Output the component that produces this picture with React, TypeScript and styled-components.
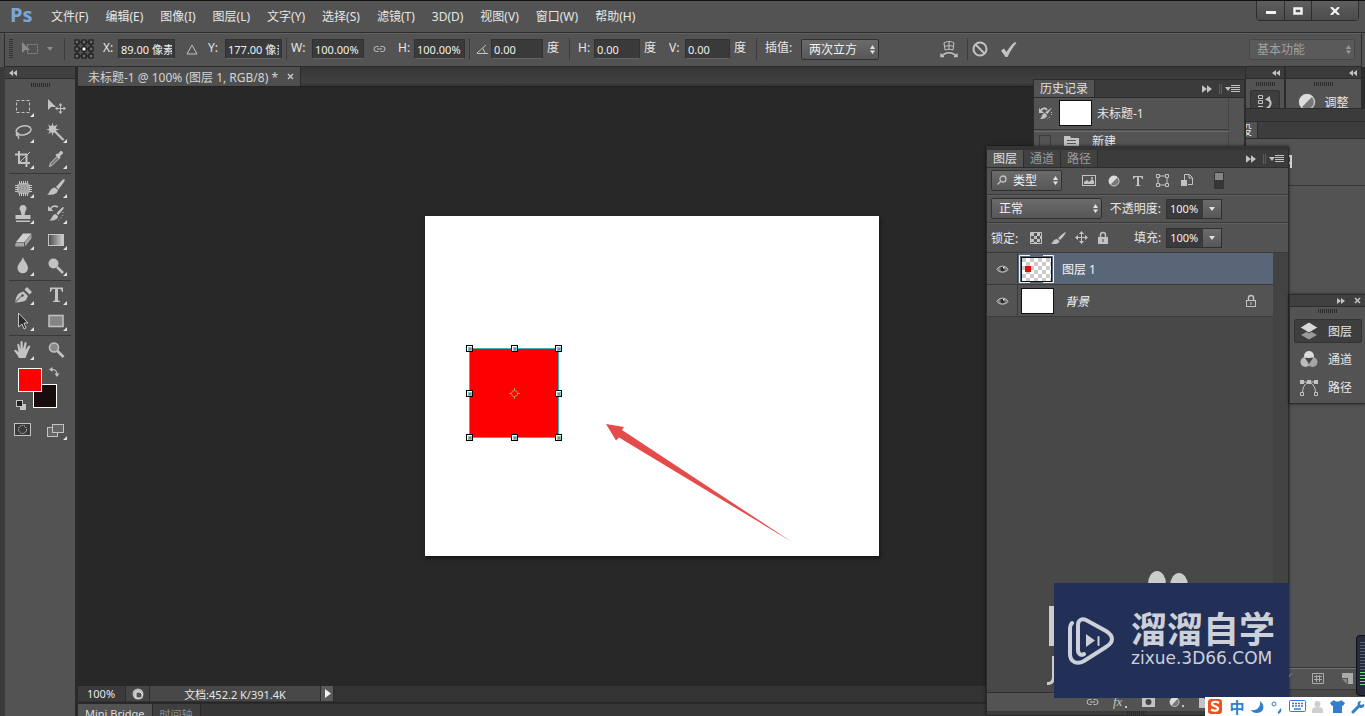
import React from 'react';
import styled, { createGlobalStyle, css } from 'styled-components';

const LINE = '#2c2c2c';
const PANEL = '#535353';
const STRIP = '#3b3b3b';
const INK = '#c3c3c3';

const Global = createGlobalStyle`
  *, *::before, *::after { box-sizing: border-box; }
  html, body { margin: 0; padding: 0; background: #282828; }
  body, button, input, select {
    font-family: "Noto Sans", "Noto Sans CJK SC", sans-serif;
    font-size: 12px;
    color: #e6e6e6;
  }
  button { border: 0; padding: 0; background: none; }
  svg { display: block; flex: none; }
`;

const Window = styled.div`
  position: relative;
  display: flex;
  flex-direction: column;
  height: 100vh;
  overflow: hidden;
  background: ${PANEL};
  border-top: 1px solid #111;
`;

/* ---------- title / menu bar ---------- */

const MenuBar = styled.header`
  display: flex;
  flex: none;
  height: 32px;
  padding-left: 10px;
  border-bottom: 1px solid ${LINE};
`;

const Logo = styled.div`
  width: 33px;
  font: bold 20px/28px "Open Sans", sans-serif;
  color: #7ba7d8;
`;

const Menus = styled.nav`
  display: flex;
  align-items: center;
  gap: 1px;
`;

const MenuButton = styled.button`
  padding: 0 8px;
  line-height: 20px;
  white-space: nowrap;
`;

const WindowButtons = styled.div`
  display: flex;
  height: 20px;
  margin: 0 6px 0 auto;
  border: 1px solid #2e2e2e;
  border-top: 0;
  border-radius: 0 0 4px 4px;
`;

const WindowButton = styled.button<{ $wide?: boolean }>`
  display: grid;
  place-items: center;
  width: ${p => (p.$wide ? 47 : 27)}px;
  background: linear-gradient(#5e5e5e, #4c4c4c);
  & + & { border-left: 1px solid #2e2e2e; }
`;

/* ---------- options bar ---------- */

const OptionsBar = styled.form`
  display: flex;
  flex: none;
  align-items: center;
  height: 34px;
  margin: 0 3px 0 4px;
  padding: 0 0 2px 4px;
  border: 1px solid ${LINE};
  border-top-color: #626262;
`;

const Slot = styled.span<{ $w: number }>`
  display: grid;
  flex: none;
  place-items: center;
  width: ${p => p.$w}px;
`;

const SlotButton = styled(Slot).attrs({ as: 'button', type: 'button' })``;

const OptionLabel = styled.label<{ $w: number; $pad?: boolean }>`
  flex: none;
  width: ${p => p.$w}px;
  padding-left: ${p => (p.$pad ? 4 : 0)}px;
  padding-bottom: 2px;
  line-height: 16px;
  white-space: nowrap;
`;

const Field = styled.input<{ $w: number }>`
  flex: none;
  width: ${p => p.$w}px;
  height: 20px;
  padding: 0 2px;
  border: 1px solid #313131;
  border-bottom-color: #646464;
  background: #3a3a3a;
  font-size: 11px;
  color: #f0f0f0;
`;

const Divider = styled.span`
  flex: none;
  width: 1px;
  height: 22px;
  margin: 0 4px;
  background: #3c3c3c;
`;

const SelectWrap = styled.span<{ $w?: number; $dim?: boolean }>`
  display: grid;
  flex: none;
  align-items: center;
  width: ${p => p.$w}px;
  height: 21px;
  border: 1px solid ${p => (p.$dim ? '#474747' : '#303030')};
  border-radius: 2px;
  background: ${p => (p.$dim ? '#5a5a5a' : 'linear-gradient(#6b6b6b, #575757)')};
  & > * { grid-area: 1 / 1; }
  & > svg { justify-self: end; margin-right: 3px; pointer-events: none; }
`;

const Select = styled.select<{ $dim?: boolean; $indent?: boolean }>`
  width: 100%;
  height: 19px;
  padding: 0 0 0 ${p => (p.$indent ? 21 : 7)}px;
  border: 0;
  appearance: none;
  background: none;
  color: ${p => (p.$dim ? '#a0a0a0' : '#f2f2f2')};
`;

const LeadIcon = styled.span`
  justify-self: start;
  margin-left: 5px;
`;

const Spacer = styled.span`
  flex: 1;
`;

/* ---------- body ---------- */

const Body = styled.div`
  display: flex;
  flex: 1;
  min-height: 0;
`;

const Toolbox = styled.aside`
  display: flex;
  flex: none;
  flex-direction: column;
  width: 78px;
  border: solid;
  border-width: 0 3px 0 5px;
  border-color: transparent #2a2a2a transparent #3a3a3a;
`;

const CollapseStrip = styled.div`
  display: flex;
  flex: none;
  align-items: center;
  height: 12px;
  padding: 0 4px;
  background: #404040;
  border-bottom: 1px solid ${LINE};
`;

const ToolGrip = styled.div<{ $short?: boolean }>`
  display: grid;
  place-items: center;
  height: ${p => (p.$short ? 12 : 15)}px;
  padding-bottom: 4px;
`;

const ToolGroup = styled.div`
  display: grid;
  grid-template-columns: 33px 33px;
  padding-left: 2px;
`;

const ToolRule = styled.hr`
  width: 62px;
  height: 1px;
  margin: 1px 4px;
  border: 0;
  background: #383838;
`;

const ToolButton = styled.button`
  height: 26px;
`;

const ColorArea = styled.div`
  padding: 4px 0 6px 10px;
`;

const Workspace = styled.main`
  display: flex;
  flex: 1;
  flex-direction: column;
  min-width: 0;
  background: #282828;
`;

const DocTabs = styled.div`
  display: flex;
  flex: none;
  height: 20px;
  background: linear-gradient(#363636, #404040 80%, #343434);
  border-bottom: 1px solid #222;
`;

const DocTab = styled.div`
  display: flex;
  align-items: center;
  gap: 9px;
  padding: 0 6px 0 10px;
  border-right: 1px solid #2a2a2a;
  background: #4f4f4f;
  color: #d4d4d4;
  white-space: nowrap;
`;

const Pasteboard = styled.div`
  display: grid;
  flex: 1;
  place-items: center;
  min-height: 0;
  padding: 0 20px 2px 0;
`;

const Artboard = styled.div`
  background: #fff;
  box-shadow: 1px 2px 4px #0008;
`;

const StatusBar = styled.footer`
  display: flex;
  flex: none;
  height: 17px;
  padding-bottom: 1px;
  background: #333;
  border-bottom: 1px solid #262626;
  font-size: 11px;
`;

const StatusCell = styled.div<{ $w: number; $bg: string; $center?: boolean }>`
  display: flex;
  align-items: center;
  justify-content: ${p => (p.$center ? 'center' : 'flex-start')};
  width: ${p => p.$w}px;
  padding-left: ${p => (p.$center ? 0 : 9)}px;
  border-right: 1px solid #2c2c2c;
  background: ${p => p.$bg};
  white-space: nowrap;
`;

const BottomTabs = styled.div`
  display: flex;
  flex: none;
  height: 13px;
  overflow: hidden;
  background: #363636;
  border-top: 1px solid #2a2a2a;
`;

const BottomTab = styled.button<{ $on?: boolean }>`
  height: 19px;
  padding: 0 7px;
  border-right: 1px solid #2a2a2a;
  background: ${p => (p.$on ? PANEL : '#3f3f3f')};
  color: ${p => (p.$on ? '#dcdcdc' : '#8e8e8e')};
  font-size: 11px;
`;

/* ---------- right dock ---------- */

const Dock = styled.aside`
  display: flex;
  flex: none;
  flex-direction: column;
  width: 120px;
  border-left: 1px solid ${LINE};
`;

const DockTop = styled.div`
  display: grid;
  flex: none;
  grid-template: 12px 29px / 38px 1fr;
  column-gap: 2px;
  padding-right: 4px;
  background: ${LINE};
`;

const DockHead = styled.div`
  display: flex;
  align-items: center;
  justify-content: flex-end;
  padding: 0 4px 0 0;
  background: ${STRIP};
  border-bottom: 1px solid ${LINE};
`;

const DockCell = styled.div`
  display: flex;
  flex-direction: column;
  align-items: center;
  gap: 4px;
  overflow: hidden;
  padding-top: 3px;
  background: ${PANEL};
`;

const DockItem = styled.button<{ $on?: boolean }>`
  display: flex;
  flex: none;
  align-items: center;
  gap: 8px;
  height: 24px;
  padding: 0 8px;
  border-radius: 3px;
  white-space: nowrap;
  ${p => p.$on && css`background: #3e3e3e; box-shadow: inset 0 0 0 1px #333;`}
`;

const DockStrip = styled.div`
  flex: none;
  height: 13px;
  background: ${STRIP};
  border-top: 1px solid ${LINE};
`;

const DockTabs = styled.div`
  display: flex;
  flex: none;
  height: 18px;
  background: #3d3d3d;
  border: 1px solid ${LINE};
  border-width: 1px 0;
`;

const DockTabStub = styled.div`
  display: flex;
  align-items: center;
  justify-content: flex-end;
  width: 12px;
  overflow: hidden;
  padding-right: 5px;
  background: ${PANEL};
  border-right: 1px solid ${LINE};
`;

const DockBody = styled.div<{ $h?: number }>`
  display: flex;
  align-items: center;
  flex: ${p => (p.$h ? 'none' : 1)};
  height: ${p => p.$h}px;
  padding-left: 41px;
  border-bottom: 1px solid #363636;
`;

const DockTools = styled.div`
  display: flex;
  flex: none;
  align-items: center;
  justify-content: flex-end;
  gap: 18px;
  height: 22px;
  padding: 0 12px 2px 0;
  border-bottom: 1px solid #3a3a3a;
  border-top: 1px solid #707070;
`;

const DockTail = styled.div`
  flex: none;
  height: 26px;
  background: #484848;
`;

/* ---------- floating panels ---------- */

const Floating = styled.section`
  position: absolute;
  display: flex;
  flex-direction: column;
  background: ${PANEL};
  overflow: hidden;
`;

const HistoryPanel = styled(Floating)`
  top: 78px;
  right: 120px;
  width: 212px;
  height: 69px;
  border: 1px solid ${LINE};
`;

const LayersPanel = styled(Floating)`
  top: 145px;
  right: 76px;
  bottom: 0;
  width: 303px;
  border: 1px solid #2a2a2a;
  border-top: 4px solid #343434;
  box-shadow: 0 0 3px #0009;
`;

const GroupPanel = styled(Floating)`
  top: 293px;
  right: 0;
  width: 76px;
  height: 110px;
  border: 1px solid ${LINE};
  border-right: 0;
  box-shadow: 0 0 3px #0008;
`;

const PanelTabs = styled.div`
  display: flex;
  flex: none;
  align-items: stretch;
  height: 18px;
  background: ${STRIP};
  border-bottom: 1px solid ${LINE};
`;

const PanelTab = styled.button<{ $on?: boolean }>`
  padding: 0 6px;
  border-right: 1px solid ${LINE};
  background: ${p => (p.$on ? PANEL : '#414141')};
  color: ${p => (p.$on ? '#e0e0e0' : '#9b9b9b')};
  line-height: 17px;
`;

const PanelTools = styled.div`
  display: flex;
  align-items: center;
  margin-left: auto;
  padding-right: 3px;
`;

const HistoryRow = styled.div`
  display: flex;
  flex: none;
  align-items: center;
  gap: 5px;
  height: 32px;
  padding: 0 0 2px 4px;
  margin-right: 15px;
  border-bottom: 1px solid #3a3a3a;
  border-right: 1px solid #444;
`;

const Thumb = styled.span`
  flex: none;
  width: 33px;
  height: 26px;
  border: 1px solid #111;
  background: #fff;
`;

const HistoryState = styled(HistoryRow)`
  gap: 13px;
  height: 22px;
  margin-top: 1px;
  border-top: 1px solid #6a6a6a;
  padding-left: 5px;
`;

const ControlRow = styled.div<{ $h: number }>`
  display: flex;
  flex: none;
  align-items: center;
  height: ${p => p.$h}px;
  padding: 0 0 1px 4px;
  border-bottom: 1px solid #3a3a3a;
  & + & { border-top: 1px solid #5f5f5f; }
`;

const IconRow = styled.div<{ $gap: number }>`
  display: flex;
  align-items: center;
  gap: ${p => p.$gap}px;
`;

const Percent = styled.span`
  display: flex;
  flex: none;
  width: 56px;
  height: 20px;
  border: 1px solid #303030;
`;

const PercentInput = styled.input`
  width: 36px;
  padding: 0 0 0 3px;
  border: 0;
  background: #3a3a3a;
  font-size: 11px;
  color: #f0f0f0;
`;

const PercentButton = styled.button`
  display: grid;
  flex: 1;
  place-items: center;
  background: linear-gradient(#6b6b6b, #575757);
`;

const PanelLabel = styled.label<{ $w: number }>`
  flex: none;
  width: ${p => p.$w}px;
  line-height: 20px;
  text-align: right;
  padding-right: 5px;
  white-space: nowrap;
`;

const LayerList = styled.div`
  flex: 1;
  min-height: 0;
  border-right: 15px solid #434343;
  background: #484848;
`;

const LayerRow = styled.div<{ $on?: boolean }>`
  display: flex;
  align-items: center;
  height: 32px;
  border-bottom: 1px solid #3a3a3a;
  background: ${p => (p.$on ? 'linear-gradient(90deg, #535353 30px, #596678 30px)' : PANEL)};
`;

const Eye = styled.button`
  display: grid;
  flex: none;
  place-items: center;
  width: 31px;
  height: 31px;
  border-right: 1px solid #3a3a3a;
`;

const LayerName = styled.span<{ $italic?: boolean }>`
  flex: 1;
  padding-left: ${p => (p.$italic ? 9 : 7)}px;
  font-style: ${p => (p.$italic ? 'italic' : 'normal')};
  color: #f4f4f4;
`;

const LayerFooter = styled.div`
  display: flex;
  flex: none;
  align-items: center;
  gap: 14px;
  height: 19px;
  padding-left: 99px;
  border-top: 1px solid #2f2f2f;
`;

const FooterEdge = styled.div`
  display: grid;
  flex: none;
  place-items: center start;
  height: 4px;
  padding-left: 140px;
  background: #3b3b3b;
`;

const GroupItems = styled.div`
  display: flex;
  flex-direction: column;
  gap: 4px;
  padding: 0 3px 0 4px;
`;

const GroupItem = styled(DockItem)`
  gap: 10px;
  padding: 0 4px 0 6px;
`;

/* ---------- overlays ---------- */

const Backmark = styled.div`
  position: absolute;
  right: 170px;
  bottom: 26px;
  width: 148px;
  height: 122px;
`;

const Brand = styled.div`
  position: absolute;
  right: 76px;
  bottom: 18px;
  display: flex;
  align-items: center;
  gap: 16px;
  width: 235px;
  height: 115px;
  padding-left: 13px;
  background: #222f56;
  color: #ccd0d8;
`;

const BrandText = styled.div`
  display: flex;
  flex-direction: column;
  align-items: flex-start;
  padding-bottom: 7px;
`;

const BrandName = styled.strong`
  font: bold 36px/42px "Noto Sans CJK SC", sans-serif;
  white-space: nowrap;
`;

const BrandUrl = styled.span`
  font: 17px/20px "DejaVu Sans", sans-serif;
`;

const ImeBar = styled.div`
  position: absolute;
  right: 0;
  bottom: 0;
  display: flex;
  align-items: center;
  justify-content: space-between;
  width: 160px;
  height: 19px;
  padding: 0 0 0 2px;
  background: #fff;
  color: #2f7fcd;
`;

const ImeText = styled.button`
  font-weight: bold;
  font-size: 15px;
  line-height: 18px;
  color: #2f7fcd;
`;

const Meter = styled.div`
  position: absolute;
  right: 0;
  bottom: 20px;
`;

/* ---------- shared glyphs ---------- */

const Grip = ({ w = 19 }: { w?: number }) => (
  <svg width={w} height="4">
    {Array.from({ length: Math.ceil(w / 2) }, (_, i) => (
      <rect key={i} x={i * 2} width="1" height="4" fill="#2b2b2b" />
    ))}
  </svg>
);

const Chevrons = ({ back, s = 8 }: { back?: boolean; s?: number }) => (
  <svg width={s} height={s - 2} viewBox="0 0 8 6">
    <path d={back ? 'M4 0v6L0 3zM8 0v6L4 3z' : 'M0 0v6l4-3zM4 0v6l4-3z'} fill={INK} />
  </svg>
);

const UpDown = ({ dim }: { dim?: boolean }) => (
  <svg width="5" height="9">
    <path d="M0 4 2.500 0 5 4zM0 5.500h5L2.500 9z" fill={dim ? '#9a9a9a' : '#e4e4e4'} />
  </svg>
);

const Caret = ({ dim }: { dim?: boolean }) => (
  <svg width="6" height="4"><path d="M0 0h6L3 4z" fill={dim ? '#8c8c8c' : '#e0e0e0'} /></svg>
);

const PanelMenu = () => (
  <svg width="22" height="12">
    <path d="M.5 1v10M2.500 1v10" stroke="#5c5c5c" />
    <path d="M6 4h6L9 8z" fill={INK} />
    <path d="M12 2.500h9M12 4.500h9M12 6.500h9M12 8.500h9" stroke={INK} />
  </svg>
);

const HalfCircle = ({ s }: { s: number }) => (
  <svg width={s} height={s} viewBox="0 0 18 18">
    <circle cx="9" cy="9" r="7.500" fill="#777" stroke={INK} strokeWidth="1.500" />
    <path d="M3.500 14.500A7.500 7.500 0 0 1 14.500 3.500z" fill="#dcdcdc" />
  </svg>
);

const Padlock = ({ solid }: { solid?: boolean }) => (
  <svg width="12" height="14">
    <path d="M3.500 6V4a2.500 2.500 0 0 1 5 0v2" fill="none" stroke={INK} strokeWidth="1.500" />
    <rect x="1.500" y="6.500" width="9" height="6" fill={solid ? INK : 'none'} stroke={INK} />
    <path d="M6 8v3" stroke={solid ? '#444' : INK} />
  </svg>
);

const ChainLink = () => (
  <svg width="13" height="8" fill="none" stroke={INK}>
    <path d="M5.500 6.500H3.500a2.500 2.500 0 0 1 0-5h2M7.500 1.500h2a2.500 2.500 0 0 1 0 5h-2M4 4h5" />
  </svg>
);

const HistoryBrush = () => (
  <svg width="16" height="16" fill={INK}>
    <path d="M14 2.500 9.500 9 7 7.500zM6.500 8l2.500 2c0 3-3 4-7 4C4.500 12 3.500 9 6.500 8z" />
    <path d="M9 5C7 2.500 4.500 3 3 5.500" fill="none" stroke={INK} strokeWidth="2" />
    <path d="M1 3v5h5z" />
    <path d="M13.500 7v4M12 12l-3 2" stroke={INK} strokeDasharray="1 1" />
  </svg>
);

const EyeIcon = () => (
  <svg width="13" height="10">
    <path d="M1 5.500C3 1 10 1 12 5.500 10 9 3 9 1 5.500z" fill="#7c7c7c" stroke={INK} />
    <circle cx="6.500" cy="5" r="2.200" fill="#2c2c2c" />
    <path d="M7 3h1.500v1.500H7z" fill="#eee" />
  </svg>
);

/* ---------- tool icons, each drawn on a 33x26 cell ---------- */

const toolArt: Record<string, React.ReactNode> = {
  选框: <rect x="9.500" y="6.500" width="13" height="12" fill="none" stroke={INK} strokeDasharray="3 2" />,
  移动: (
    <>
      <path d="M8 5v11l3-3h5z" fill={INK} />
      <path d="M20.500 10v9M16 14.500h9" stroke={INK} />
      <path d="M18.500 11.500l2-2.500 2 2.500zM18.500 17.500l2 2.500 2-2.500zM17.500 12.500l-2.500 2 2.500 2zM23.500 12.500l2.500 2-2.500 2z" fill={INK} />
    </>
  ),
  套索: (
    <g fill="none" stroke={INK} strokeWidth="1.500">
      <ellipse cx="16.500" cy="10.500" rx="7.500" ry="4.500" transform="rotate(-12 16 10)" />
      <path d="M9 14c2-2 4-.5 2.500 1s-3 0-2-1c1 2 3 2 2 5" strokeWidth="1.200" />
    </g>
  ),
  魔棒: (
    <>
      <path d="M12.500 2.500l1 4 4-2-2 4 4 1-4 1 2 3.500-4-2-1 4-1-4-3.500 2 2-3.500-4-1 4-1-2-4 3.500 2z" fill={INK} />
      <circle cx="12.500" cy="9" r="3.500" fill={INK} />
      <path d="M15 11.500l8.500 8.500" stroke={INK} strokeWidth="2.200" />
    </>
  ),
  裁剪: (
    <g fill="none" stroke={INK}>
      <path d="M12 5v12h11M8 8.500h11.500V21" strokeWidth="2" />
      <path d="M12 17 23 6" />
    </g>
  ),
  吸管: (
    <>
      <path d="M9.500 20.500l1-3.500 7-7 2 2-7 7z" fill="#777" stroke={INK} />
      <path d="M15.500 9l1.500-1.500 1 .5 2-2.500c1.500-1.500 4 1 2.500 2.500L20 10l.5 1.500-1.500 1.500z" fill={INK} />
    </>
  ),
  修复: (
    <>
      <rect x="10" y="8" width="13" height="11" rx="4" fill="#a8a8a8" />
      <path d="M12.500 6v3M14.500 6v3M16.500 6v3M18.500 6v3M20.500 6v3M12.500 18v3M14.500 18v3M16.500 18v3M18.500 18v3M20.500 18v3M8 10.500h3M8 12.500h3M8 14.500h3M8 16.500h3M22 10.500h3M22 12.500h3M22 14.500h3M22 16.500h3" stroke={INK} />
      <path d="M12 11h1m2 0h1m2 0h1m-6 2h1m2 0h1m2 0h1m-8 2h1m2 0h1m2 0h1" stroke="#777" />
    </>
  ),
  画笔: (
    <path d="M24.500 4.500c-1-.8-2 .2-8.500 7.500l2.500 2.500c5-7 7-9 6-10zM15 12.500l3 2.500c-.5 4-5 5.500-11 4.500 3-.5 2-6 8-7z" fill={INK} />
  ),
  图章: (
    <path d="M16 4a3.500 3.500 0 0 1 2.500 6l-1 4h6v4h-15v-4h6l-1-4A3.500 3.500 0 0 1 16 4zM9 19.500h14V21H9z" fill={INK} />
  ),
  历史画笔: (
    <>
      <path d="M23.500 6c-1-.5-5 4-7 6.500l2 1.500c4-5 6-7 5-8zM15.500 13l2.500 2c0 3-3 5-9 4.500 3-1 3-6 6.500-6.500z" fill={INK} />
      <path d="M18 6c-3-1.500-6-1-7.500 2" fill="none" stroke={INK} strokeWidth="1.600" />
      <path d="M8 5v5h5.500z" fill={INK} />
      <path d="M23 11v3l-2 3-3 2.500" fill="none" stroke={INK} strokeDasharray="1 2" />
    </>
  ),
  橡皮: (
    <>
      <path d="M16 6.500h8.500l-7 8.500H9z" fill="#d0d0d0" />
      <path d="M9 15.500h8v4H9a1 1 0 0 1-1-1zM18 15l6.500-8v4.500L18 19.500z" fill="#a5a5a5" />
    </>
  ),
  渐变: <rect x="8.500" y="7.500" width="15" height="11" fill="url(#fade)" stroke={INK} />,
  模糊: <path d="M16 4c1 4 5 7 5 11a5 5 0 0 1-10.500 0C10.500 11 15 8 16 4z" fill={INK} />,
  减淡: (
    <>
      <circle cx="13.500" cy="10.500" r="5" fill={INK} />
      <path d="M17 14l6 6" stroke={INK} strokeWidth="2.500" />
    </>
  ),
  钢笔: (
    <>
      <path d="M8 20.500c1-5 2-8 4.500-9.500l4-1.500 4.500 4.500-2 4c-2 2-6 2-11 2.500z" fill={INK} />
      <path d="M17.500 7.500 20 5l5 5-2.500 2.500z" fill={INK} />
      <path d="M8.500 20l6-6" stroke="#4a4a4a" />
      <circle cx="15.500" cy="13.500" r="1.200" fill="#4a4a4a" />
    </>
  ),
  文字: <path d="M10 5.500h13v4.500h-1c-.5-2.500-1-3-4-3v10.500c0 1 .5 1.300 2 1.500v1h-7v-1c1.500-.2 2-.5 2-1.500V7c-3 0-3.500.5-4 3h-1z" fill={INK} />,
  选择: <path d="M11.500 5v14l3.500-3 2 5 2-1-2-5h4z" fill="#2b2b2b" stroke={INK} />,
  矩形: <rect x="9" y="7.500" width="14" height="11" fill="#858585" stroke={INK} strokeWidth="1.500" />,
  抓手: (
    <path d="M12 21c-1.500-3-3-5-4.500-6.500-.8-1 .5-2 1.500-1.500l2.500 2-1.200-7c-.2-1.500 1.500-1.700 1.900-.4l1.300 4.900V5.200c0-1.600 2-1.600 2.100 0L16 12l1.600-6.200c.4-1.500 2.200-1 2 .5L18.600 13l2.800-4c.8-1.200 2.300-.2 1.700 1L20 17l-1.500 4z" fill={INK} />
  ),
  缩放: (
    <>
      <circle cx="14" cy="10.500" r="4.500" fill="#8a8a8a" stroke={INK} strokeWidth="1.500" />
      <path d="M17.500 14l6 6" stroke={INK} strokeWidth="2.600" />
    </>
  ),
};

const Tool = ({ name, plain }: { name: string; plain?: boolean }) => (
  <ToolButton type="button" aria-label={`${name}工具`}>
    <svg width="33" height="26">
      {toolArt[name]}
      {!plain && <path d="M27 19v4h-4z" fill="#e2e2e2" />}
    </svg>
  </ToolButton>
);

const toolGroups: [string, boolean?][][] = [
  [['选框'], ['移动', true], ['套索'], ['魔棒'], ['裁剪'], ['吸管']],
  [['修复'], ['画笔'], ['图章'], ['历史画笔'], ['橡皮'], ['渐变'], ['模糊'], ['减淡']],
  [['钢笔'], ['文字'], ['选择'], ['矩形']],
  [['抓手'], ['缩放', true]],
];

const menus = ['文件(F)', '编辑(E)', '图像(I)', '图层(L)', '文字(Y)', '选择(S)', '滤镜(T)', '3D(D)', '视图(V)', '窗口(W)', '帮助(H)'];

const handles = [[45, 133], [90, 133], [134, 133], [45, 178], [134, 178], [45, 222], [90, 222], [134, 222]];

const pivotCells = [0, 7, 14].flatMap(y => [0, 7, 14].map(x => [x, y]));

export default function App() {
  return (
    <Window>
      <Global />
      <MenuBar>
        <Logo>Ps</Logo>
        <Menus>
          {menus.map(m => <MenuButton key={m}>{m}</MenuButton>)}
        </Menus>
        <WindowButtons>
          <WindowButton aria-label="最小化">
            <svg width="10" height="10"><path d="M0 5h10v3H0z" fill="#f2f2f2" /></svg>
          </WindowButton>
          <WindowButton aria-label="最大化">
            <svg width="10" height="8"><rect x="1.500" y="1.500" width="7" height="5" fill="none" stroke="#f2f2f2" strokeWidth="2.500" /></svg>
          </WindowButton>
          <WindowButton $wide aria-label="关闭">
            <svg width="10" height="8"><path d="M1 0l8 8M9 0 1 8" stroke="#f2f2f2" strokeWidth="2.200" /></svg>
          </WindowButton>
        </WindowButtons>
      </MenuBar>

      <OptionsBar>
        <svg width="4" height="20">
          {Array.from({ length: 10 }, (_, i) => <rect key={i} y={i * 2} width="4" height="1" fill="#333" />)}
        </svg>
        <Slot $w={47}>
          <svg width="32" height="14">
            <path d="M1 0v11l3-3h5z" fill="#8a8a8a" />
            <rect x="6.500" y="2.500" width="10" height="9" fill="none" stroke="#8a8a8a" strokeDasharray="2 1" />
            <path d="M26 5h6l-3 4z" fill="#8c8c8c" />
          </svg>
        </Slot>
        <Divider />
        <SlotButton $w={30} aria-label="参考点">
          <svg width="20" height="20" fill="none">
            <path d="M3 3h14v14H3zM3 10h14M10 3v14" stroke="#111" />
            {pivotCells.map(([x, y]) => (
              <rect key={`${x}-${y}`} x={x + 1} y={y + 1} width="4" height="4" fill={x === 7 && y === 7 ? '#fff' : '#6a6a6a'} stroke="#111" />
            ))}
          </svg>
        </SlotButton>
        <Slot $w={4} />
        <OptionLabel $w={15} htmlFor="px">X:</OptionLabel>
        <Field $w={57} id="px" defaultValue="89.00 像素" />
        <Slot $w={33}>
          <svg width="12" height="11"><path d="M6 1l5 9H1z" fill="none" stroke={INK} /></svg>
        </Slot>
        <OptionLabel $w={17} htmlFor="py">Y:</OptionLabel>
        <Field $w={57} id="py" defaultValue="177.00 像素" />
        <Divider />
        <OptionLabel $w={21} htmlFor="sw">W:</OptionLabel>
        <Field $w={52} id="sw" defaultValue="100.00%" />
        <Slot $w={30}><ChainLink /></Slot>
        <OptionLabel $w={20} $pad htmlFor="sh">H:</OptionLabel>
        <Field $w={51} id="sh" defaultValue="100.00%" />
        <Divider />
        <Slot $w={17}>
          <svg width="13" height="10"><path d="M1 9.500h11M1 9 10 1M7 4.500l2 4.500" fill="none" stroke={INK} /></svg>
        </Slot>
        <Field $w={52} id="rot" aria-label="旋转" defaultValue="0.00" />
        <OptionLabel $pad $w={22} htmlFor="rot">度</OptionLabel>
        <Divider />
        <OptionLabel $pad $w={20} htmlFor="skh">H:</OptionLabel>
        <Field $w={46} id="skh" defaultValue="0.00" />
        <OptionLabel $pad $w={29} htmlFor="skh">度</OptionLabel>
        <OptionLabel $w={16} htmlFor="skv">V:</OptionLabel>
        <Field $w={45} id="skv" defaultValue="0.00" />
        <OptionLabel $pad $w={22} htmlFor="skv">度</OptionLabel>
        <Divider />
        <OptionLabel $pad $w={40} htmlFor="interp">插值:</OptionLabel>
        <SelectWrap $w={78}>
          <Select id="interp"><option>两次立方</option></Select>
          <UpDown />
        </SelectWrap>
        <Slot $w={55} />
        <SlotButton $w={29} aria-label="变形">
          <svg width="18" height="18" fill="none" stroke={INK}>
            <path d="M4 3c3-2 7-2 10 0l-1 7c-3-1-5-1-8 0zM9 1.500v8M4 6.500c3-1 7-1 10 0" />
            <path d="M1 16.500c5-5 11-5 16 0M1 13.500v3h3M17 13.500v3h-3" strokeWidth="1.400" />
          </svg>
        </SlotButton>
        <Divider />
        <SlotButton $w={16} aria-label="取消变换">
          <svg width="16" height="16" fill="none" stroke={INK} strokeWidth="2">
            <circle cx="8" cy="8" r="6.500" /><path d="M3.500 3.500l9 9" />
          </svg>
        </SlotButton>
        <SlotButton $w={42} aria-label="提交变换">
          <svg width="16" height="15"><path d="M0 8.500 3 6.500l2.500 3.500C8 6 11 2 14 0l1.500 1C12 5 9 9.500 6.500 15h-2z" fill={INK} /></svg>
        </SlotButton>
        <Spacer />
        <SelectWrap $w={106} $dim>
          <Select $dim aria-label="工作区"><option>基本功能</option></Select>
          <UpDown dim />
        </SelectWrap>
        <Slot $w={6} />
      </OptionsBar>

      <Body>
        <Toolbox>
          <CollapseStrip><Chevrons back /></CollapseStrip>
          <ToolGrip><Grip /></ToolGrip>
          <svg width="0" height="0">
            <linearGradient id="fade"><stop stopColor="#4a4a4a" /><stop offset="1" stopColor="#d5d5d5" /></linearGradient>
          </svg>
          {toolGroups.map((group, i) => (
            <React.Fragment key={i}>
              {i > 0 && <ToolRule />}
              <ToolGroup>
                {group.map(([name, plain]) => <Tool key={name} name={name} plain={plain} />)}
              </ToolGroup>
            </React.Fragment>
          ))}
          <ColorArea>
            <svg width="46" height="44">
              <rect x="18.500" y="17.500" width="23" height="23" fill="#190c0c" stroke="#fff" />
              <rect x="3.500" y="1.500" width="23" height="23" fill="red" stroke="#fff" />
              <path d="M37 2.500c4 0 5 2 5 5" fill="none" stroke={INK} strokeWidth="1.200" />
              <path d="M34 2.500l3.500-2.500v5zM39.500 6.500h5L42 10z" fill={INK} />
              <rect x="5" y="37" width="6" height="6" fill={INK} />
              <rect x="1.500" y="33.500" width="6" height="6" fill="#222" stroke={INK} />
            </svg>
          </ColorArea>
          <ToolGroup>
            <ToolButton aria-label="快速蒙版">
              <svg width="33" height="26">
                <rect x="7.500" y="6.500" width="16" height="12" fill="#3a3a3a" stroke={INK} />
                <circle cx="15.500" cy="12.500" r="4" fill="none" stroke="#eee" strokeDasharray="1 1" />
              </svg>
            </ToolButton>
            <ToolButton aria-label="屏幕模式">
              <svg width="33" height="26" fill="#666" stroke={INK}>
                <rect x="7.500" y="10.500" width="10" height="9" />
                <rect x="12.500" y="7.500" width="11" height="8" />
                <path d="M27 19v4h-4z" fill="#e2e2e2" stroke="none" />
              </svg>
            </ToolButton>
          </ToolGroup>
        </Toolbox>

        <Workspace>
          <DocTabs>
            <DocTab>
              未标题-1 @ 100% (图层 1, RGB/8) *
              <button aria-label="关闭文档"><svg width="7" height="7"><path d="M1 1l5 5M6 1 1 6" stroke={INK} strokeWidth="1.500" /></svg></button>
            </DocTab>
          </DocTabs>
          <Pasteboard>
            <Artboard>
              <svg width="454" height="340">
                <rect x="44.500" y="132.500" width="89" height="89" fill="red" stroke="#35b5b5" />
                <g fill="none">
                  {handles.map(([x, y]) => (
                    <g key={`${x}-${y}`}>
                      <rect x={x - 3.5} y={y - 3.5} width="6" height="6" fill="#fff" stroke="#000" />
                      <rect x={x - 1.5} y={y - 1.5} width="3" height="3" fill="#a77" stroke="#7cc" />
                    </g>
                  ))}
                </g>
                <g fill="none" stroke="#a8a060">
                  <circle cx="89.500" cy="177.500" r="3" />
                  <path d="M89.500 172v3M89.500 180v3M84 177.500h3M92 177.500h3" />
                </g>
                <path d="M181 208 199 211 197 214 367 326 194 221.500 191 224.500z" fill="#e64b4b" />
              </svg>
            </Artboard>
          </Pasteboard>
          <StatusBar>
            <StatusCell $w={48} $bg="#3a3a3a">100%</StatusCell>
            <StatusCell $w={24} $bg="#454545" $center>
              <svg width="12" height="12">
                <circle cx="6" cy="6" r="5.500" fill="#bdbdbd" />
                <path d="M4 4h4l2 2v4H4z" fill="#555" stroke="#eee" />
              </svg>
            </StatusCell>
            <StatusCell $w={171} $bg="#484848" $center>文档:452.2 K/391.4K</StatusCell>
            <StatusCell $w={13} $bg="#5a5a5a" $center>
              <svg width="7" height="9"><path d="M1 0v9l6-4.500z" fill="#f0f0f0" /></svg>
            </StatusCell>
          </StatusBar>
          <BottomTabs>
            <BottomTab $on>Mini Bridge</BottomTab>
            <BottomTab>时间轴</BottomTab>
          </BottomTabs>
        </Workspace>

        <Dock>
          <DockTop>
            <DockHead><Chevrons back /></DockHead>
            <DockHead><Chevrons back /></DockHead>
            <DockCell>
              <Grip />
              <DockItem $on aria-label="历史记录">
                <svg width="14" height="16" fill="none" stroke={INK}>
                  <path d="M.5 1.500h4v3h-4zM.5 6.500h4v3h-4zM0 12.500h5M0 14.500h5" />
                  <path d="M8 15c5-2 6-7 2.500-10" strokeWidth="2" /><path d="M7 5.500 12 2v6z" fill={INK} stroke="none" />
                </svg>
              </DockItem>
            </DockCell>
            <DockCell>
              <Grip />
              <DockItem><HalfCircle s={18} />调整</DockItem>
            </DockCell>
          </DockTop>
          <DockStrip />
          <DockTabs><DockTabStub>设</DockTabStub></DockTabs>
          <DockBody $h={47}>
            <svg width="5" height="14"><path d="M1 1h3v12M1 8h2" fill="none" stroke="#ddd" strokeWidth="2" /></svg>
          </DockBody>
          <DockBody />
          <DockTools>
            <svg width="12" height="12"><path d="M11 0 6 7 4 6zM5 7C4 10 2 10 0 10c2-1 2-4 4-4z" fill="#999" /></svg>
            <svg width="12" height="11"><path d="M.5.5h11v10H.5zM2 3.500h8M2 6.500h8M4.500 2v7M7.500 2v7" fill="none" stroke="#aaa" /></svg>
            <svg width="11" height="11"><path d="M0 0h11v11H6V5H0z" fill="#aaa" /><path d="M0 6h5v5z" fill="#888" /></svg>
          </DockTools>
          <DockTail />
        </Dock>
      </Body>

      <HistoryPanel>
        <PanelTabs>
          <PanelTab $on>历史记录</PanelTab>
          <PanelTools><Chevrons s={10} /><Slot $w={7} /><PanelMenu /></PanelTools>
        </PanelTabs>
        <HistoryRow>
          <HistoryBrush />
          <Thumb />
          未标题-1
        </HistoryRow>
        <HistoryState>
          <svg width="12" height="12"><rect x=".5" y=".5" width="11" height="11" fill="none" stroke="#3c3c3c" /></svg>
          <svg width="15" height="12"><path d="M0 1h6l1 2h8v9H0z" fill={INK} /><path d="M3 5.500h9M3 8.500h9" stroke="#555" /></svg>
          新建
        </HistoryState>
      </HistoryPanel>

      <LayersPanel>
        <PanelTabs>
          <PanelTab $on>图层</PanelTab>
          <PanelTab>通道</PanelTab>
          <PanelTab>路径</PanelTab>
          <PanelTools><Chevrons s={10} /><Slot $w={7} /><PanelMenu /></PanelTools>
        </PanelTabs>
        <ControlRow $h={27}>
          <SelectWrap $w={71}>
            <Select $indent aria-label="图层过滤"><option>类型</option></Select>
            <LeadIcon>
              <svg width="10" height="11" fill="none" stroke={INK} strokeWidth="1.300"><circle cx="6" cy="4" r="3" /><path d="M4 6 .5 9.500" /></svg>
            </LeadIcon>
            <UpDown />
          </SelectWrap>
          <Slot $w={20} />
          <IconRow $gap={12}>
            <svg width="14" height="12"><rect x=".5" y=".5" width="13" height="10" fill="none" stroke={INK} /><path d="M2 9V7l3-2 2 2 3-3 2 2v3z" fill={INK} /><circle cx="10" cy="3" r="1" fill={INK} /></svg>
            <HalfCircle s={12} />
            <svg width="12" height="12"><path d="M1 1h10v3h-1c0-1.500-1-2-3-2v7c0 1 0 1 1.500 1.500v.5h-5v-.5C5 10 5 10 5 9V2C3 2 2 2.500 2 4H1z" fill={INK} /></svg>
            <svg width="13" height="13" fill={PANEL} stroke={INK}><path d="M2 2h9v9H2z" /><path d="M.5.5h3v3h-3zM9.500.5h3v3h-3zM.5 9.500h3v3h-3zM9.500 9.500h3v3h-3z" /></svg>
            <svg width="12" height="13"><path d="M3.500 6V.5h5l3 3v7H7M8 1v3h3" fill="none" stroke={INK} /><rect y="6" width="6" height="6" fill={INK} /></svg>
          </IconRow>
          <Slot $w={21} />
          <svg width="10" height="17"><rect width="10" height="17" rx="1" fill="#363636" /><rect x="1" y="1" width="8" height="7" fill="#858585" /></svg>
        </ControlRow>
        <ControlRow $h={28}>
          <SelectWrap $w={111}>
            <Select aria-label="混合模式"><option>正常</option></Select>
            <UpDown />
          </SelectWrap>
          <PanelLabel $w={64} htmlFor="opacity">不透明度:</PanelLabel>
          <Percent>
            <PercentInput id="opacity" defaultValue="100%" />
            <PercentButton aria-label="不透明度滑块"><Caret /></PercentButton>
          </Percent>
        </ControlRow>
        <ControlRow $h={30}>
          <span>锁定:</span>
          <Slot $w={12} />
          <IconRow $gap={9}>
            <svg width="12" height="12"><path d="M.5.500h11v11H.5z" fill="none" stroke={INK} /><path d="M1 1h3v3H1zM7 1h3v3H7zM4 4h3v3H4zM1 7h3v3H1zM7 7h3v3H7zM10 4h1v3h-1zM4 10h3v1H4z" fill={INK} /></svg>
            <svg width="15" height="12"><path d="M15 0C12 1 9 4 7 6.500L9 8c3-2.500 5-5.500 6-8zM6 7l2.500 2C8 12 4 12.500 0 12c2-1 2-5 6-5z" fill={INK} /></svg>
            <svg width="13" height="13" fill={INK}><path d="M6.500 2v9M2 6.500h9" stroke={INK} /><path d="M4 3l2.500-3L9 3zM4 10l2.500 3L9 10zM3 4 0 6.500 3 9zM10 4l3 2.500L10 9z" /></svg>
            <Padlock solid />
          </IconRow>
          <PanelLabel $w={57} htmlFor="fill">填充:</PanelLabel>
          <Percent>
            <PercentInput id="fill" defaultValue="100%" />
            <PercentButton aria-label="填充滑块"><Caret /></PercentButton>
          </Percent>
        </ControlRow>
        <LayerList>
          <LayerRow $on>
            <Eye aria-label="图层可见性"><EyeIcon /></Eye>
            <svg width="37" height="30">
              <defs>
                <pattern id="checks" width="8" height="8" patternUnits="userSpaceOnUse">
                  <rect width="8" height="8" fill="#fff" /><path d="M0 0h4v4H0zM4 4h4v4H4z" fill="#ccc" />
                </pattern>
              </defs>
              <path d="M12 1.500H1.500v27H12M25 1.500h10.500v27H25" fill="none" stroke="#f4f4f4" />
              <rect x="3.500" y="3.500" width="30" height="24" fill="url(#checks)" stroke="#111" />
              <rect x="7" y="12" width="6" height="6" fill="#e80c0c" />
            </svg>
            <LayerName>图层 1</LayerName>
          </LayerRow>
          <LayerRow>
            <Eye aria-label="图层可见性"><EyeIcon /></Eye>
            <Slot $w={38}><Thumb /></Slot>
            <LayerName $italic>背景</LayerName>
            <Padlock />
            <Slot $w={16} />
          </LayerRow>
        </LayerList>
        <LayerFooter>
          <ChainLink />
          <svg width="15" height="16"><text x="0" y="12" fill={INK} fontSize="13" fontStyle="italic" fontFamily="Liberation Serif, serif">fx</text><path d="M12 12h2v2h-2z" fill={INK} /></svg>
          <svg width="13" height="10"><path d="M0 0h13v10H0z" fill={INK} /><circle cx="6.500" cy="5" r="3" fill="#444" /></svg>
          <svg width="16" height="12"><circle cx="5.500" cy="6" r="4.500" fill="#777" stroke={INK} /><path d="M2.500 9.500A4.500 4.500 0 0 1 9 2.500z" fill="#dcdcdc" /><path d="M13 9h2v2h-2z" fill={INK} /></svg>
          <svg width="14" height="11"><path d="M0 1h5l1 2h8v8H0z" fill={INK} /></svg>
        </LayerFooter>
        <FooterEdge><Grip /></FooterEdge>
      </LayersPanel>

      <GroupPanel>
        <CollapseStrip>
          <Spacer />
          <Chevrons />
          <Slot $w={9} />
          <svg width="7" height="7"><path d="M1 1l5 5M6 1 1 6" stroke={INK} strokeWidth="1.500" /></svg>
        </CollapseStrip>
        <ToolGrip $short><Grip /></ToolGrip>
        <GroupItems>
          <GroupItem $on>
            <svg width="18" height="18"><path d="M9 8.500l8 4.500-8 4.500L1 13z" fill="#9a9a9a" /><path d="M9 0l9 5.500L9 11 0 5.500z" fill="#d8d8d8" stroke="#3e3e3e" /></svg>
            图层
          </GroupItem>
          <GroupItem>
            <svg width="18" height="18"><circle cx="9" cy="6" r="5" fill="#dcdcdc" /><circle cx="5.500" cy="12" r="5" fill="#bbb" /><circle cx="12.500" cy="12" r="5" fill="#a5a5a5" /><path d="M5 8h8l-4 6z" fill="#484848" /></svg>
            通道
          </GroupItem>
          <GroupItem>
            <svg width="18" height="17" fill="none" stroke={INK}><path d="M1 3h16M2.500 13C3 7 6 3.500 9 3.500s6 3.500 6.500 9.500" /><path d="M.5 13.500h3v3h-3zM14.500 13.500h3v3h-3z" /><path d="M0 1h4v4H0zM7 1h4v4H7zM14 1h4v4h-4z" fill={INK} stroke="none" /></svg>
            路径
          </GroupItem>
        </GroupItems>
      </GroupPanel>

      <Backmark>
        <svg width="148" height="122" fill="#ccc">
          <ellipse cx="110" cy="16" rx="9" ry="13" /><ellipse cx="132" cy="18" rx="9" ry="13" />
          <path d="M2 38h6v40H2z" />
          <path d="M5 88h3v20c0 7-3 9-8 9v-3c4 0 5-2 5-6z" />
        </svg>
      </Backmark>
      <Brand>
        <svg width="48" height="50" fill="none" stroke="#ccd0d8" strokeWidth="4" strokeLinecap="round">
          <path d="M17 38c-3 2-6 0-6-4V9c0-5 4-7 8-5l20 11c8 5 8 11 0 16L17 45C10 49 3 46 3 38V12c0-2 1-4 2-5" />
          <path d="M19 18v13l9-6.500z" fill="#ccd0d8" stroke="none" /><path d="M31.500 21v8" strokeWidth="2" />
        </svg>
        <BrandText>
          <BrandName>溜溜自学</BrandName>
          <BrandUrl>zixue.3D66.COM</BrandUrl>
        </BrandText>
      </Brand>
      <Meter>
        <svg width="9" height="61">
          <path d="M9 .5H4a3.500 3.500 0 0 0-3.500 3.500v53A3.500 3.500 0 0 0 4 60.500h5" fill="#252b3a" stroke="#0e1118" />
          {Array.from({ length: 15 }, (_, i) => <rect key={i} x="4" y={7 + i * 3} width="5" height="1" fill={i < 10 ? '#55607a' : '#6fe08a'} />)}
        </svg>
      </Meter>
      <ImeBar>
        <svg width="16" height="17"><rect x="1" y="1" width="14" height="15" rx="3" fill="#e8541e" /><path d="M12 5C9 3 5 3.500 5 6s6 2 6 4.500-4 3-7 1" fill="none" stroke="#fff" strokeWidth="2.200" /></svg>
        <ImeText>中</ImeText>
        <svg width="14" height="14"><path d="M9 1c5 3 5 12-3 12-3 0-5-1-6-3 6 1 10-3 9-9z" fill="#2f7fcd" /></svg>
        <svg width="11" height="14" fill="none" stroke="#2f7fcd"><circle cx="3" cy="4" r="2" /><path d="M9 9c1 1 0 3-2 4" strokeWidth="2" /></svg>
        <svg width="17" height="13" fill="none" stroke="#2f7fcd"><rect x=".5" y=".5" width="16" height="11" rx="1" /><path d="M3 3.500h11M3 6h11" strokeDasharray="2 1" strokeWidth="1.500" /><path d="M5 9h7" strokeWidth="1.500" /></svg>
        <svg width="11" height="14" fill="#cfcfcf"><circle cx="5.500" cy="4" r="3" /><path d="M0 13V10c0-2 2-3 5.500-3S11 8 11 10v3z" /></svg>
        <svg width="15" height="13"><path d="M4 0c1 2 6 2 7 0l4 3-2 3-1-.5V13H3V5.500L2 6 0 3z" fill="#2f7fcd" /></svg>
        <svg width="14" height="14"><path d="M2 12 8 6" stroke="#2f7fcd" strokeWidth="3" strokeLinecap="round" /><path d="M13 4l-3 1-1-1 1-3C7 1 6 3 7 6l2 2c3 0 5-1 4-4z" fill="#2f7fcd" /></svg>
      </ImeBar>
    </Window>
  );
}
